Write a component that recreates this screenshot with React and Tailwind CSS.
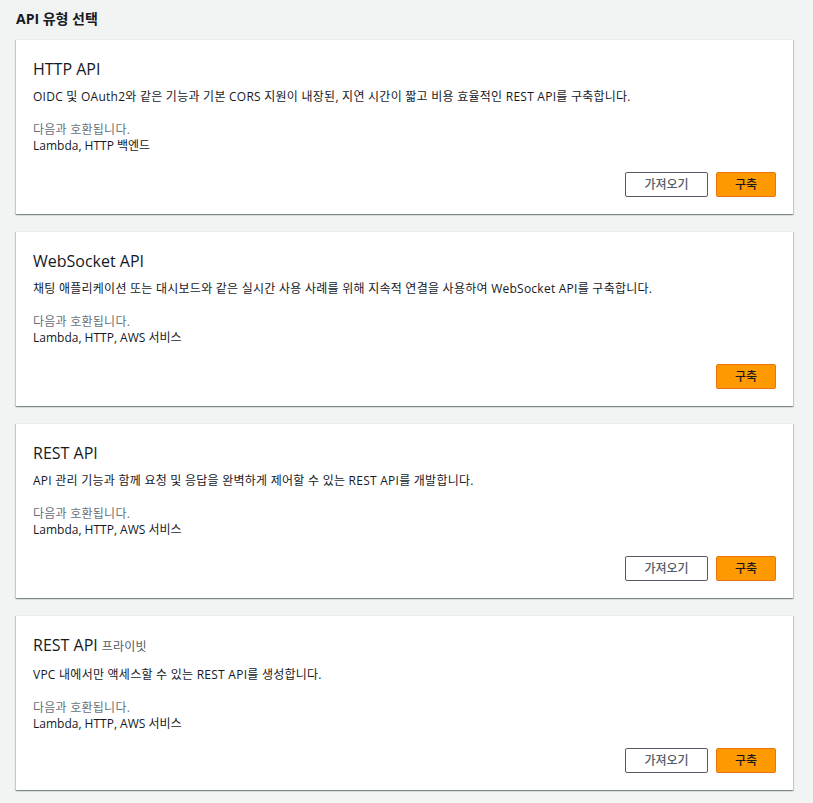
import React from 'react';

const font = { fontFamily: '"Open Sans", "Noto Sans CJK KR", sans-serif' };

const apis = [
    {
        title: 'HTTP API',
        desc: 'OIDC 및 OAuth2와 같은 기능과 기본 CORS 지원이 내장된, 지연 시간이 짧고 비용 효율적인 REST API를 구축합니다.',
        compat: 'Lambda, HTTP 백엔드',
        importable: true,
    },
    {
        title: 'WebSocket API',
        desc: '채팅 애플리케이션 또는 대시보드와 같은 실시간 사용 사례를 위해 지속적 연결을 사용하여 WebSocket API를 구축합니다.',
        compat: 'Lambda, HTTP, AWS 서비스',
        importable: false,
    },
    {
        title: 'REST API',
        desc: 'API 관리 기능과 함께 요청 및 응답을 완벽하게 제어할 수 있는 REST API를 개발합니다.',
        compat: 'Lambda, HTTP, AWS 서비스',
        importable: true,
    },
    {
        title: 'REST API',
        tag: '프라이빗',
        desc: 'VPC 내에서만 액세스할 수 있는 REST API를 생성합니다.',
        compat: 'Lambda, HTTP, AWS 서비스',
        importable: true,
    },
];

function ApiCard({ api }) {
    return (
        <div className="bg-white border-t border-[#eaeded] shadow-[0_1px_1px_0_rgba(0,28,36,0.3),1px_1px_1px_0_rgba(0,28,36,0.15),-1px_1px_1px_0_rgba(0,28,36,0.15)] h-[175px] px-[17px] pt-[17px] pb-[17px] flex flex-col">
            <h3 className="text-[16px] leading-[24px] text-[#16191f]">
                {api.title}
                {api.tag && <span className="text-[12px] text-[#545b64] ml-1 tracking-[0.25px]">{api.tag}</span>}
            </h3>
            <p className="text-[12px] leading-[16px] text-[#16191f] mt-[8px] tracking-[0.25px]">{api.desc}</p>
            <div className="mt-[17px] text-[12px] leading-[16px]">
                <div className="text-[#687078] tracking-[0.25px]">다음과 호환됩니다.</div>
                <div className="text-[#16191f]">{api.compat}</div>
            </div>
            <div className="mt-auto flex justify-end gap-[8px]">
                {api.importable && (
                    <button className="w-[83px] h-[25px] border border-[#545b64] rounded-[2px] bg-white text-[12px] text-[#545b64] font-medium">
                        가져오기
                    </button>
                )}
                <button className="w-[60px] h-[25px] border border-[#ec7211] rounded-[2px] bg-[#ff9900] text-[12px] text-[#16191f] font-medium">
                    구축
                </button>
            </div>
        </div>
    );
}

export default function App() {
    return (
        <div className="min-h-[803px] bg-[#f2f3f3] px-[16px] pr-[20px] pt-[9px]" style={font}>
            <h2 className="text-[14px] leading-[20px] font-bold text-[#16191f] mb-[10px]">API 유형 선택</h2>
            <div className="flex flex-col gap-[17px]">
                {apis.map((api, i) => (
                    <ApiCard key={i} api={api} />
                ))}
            </div>
        </div>
    );
}
